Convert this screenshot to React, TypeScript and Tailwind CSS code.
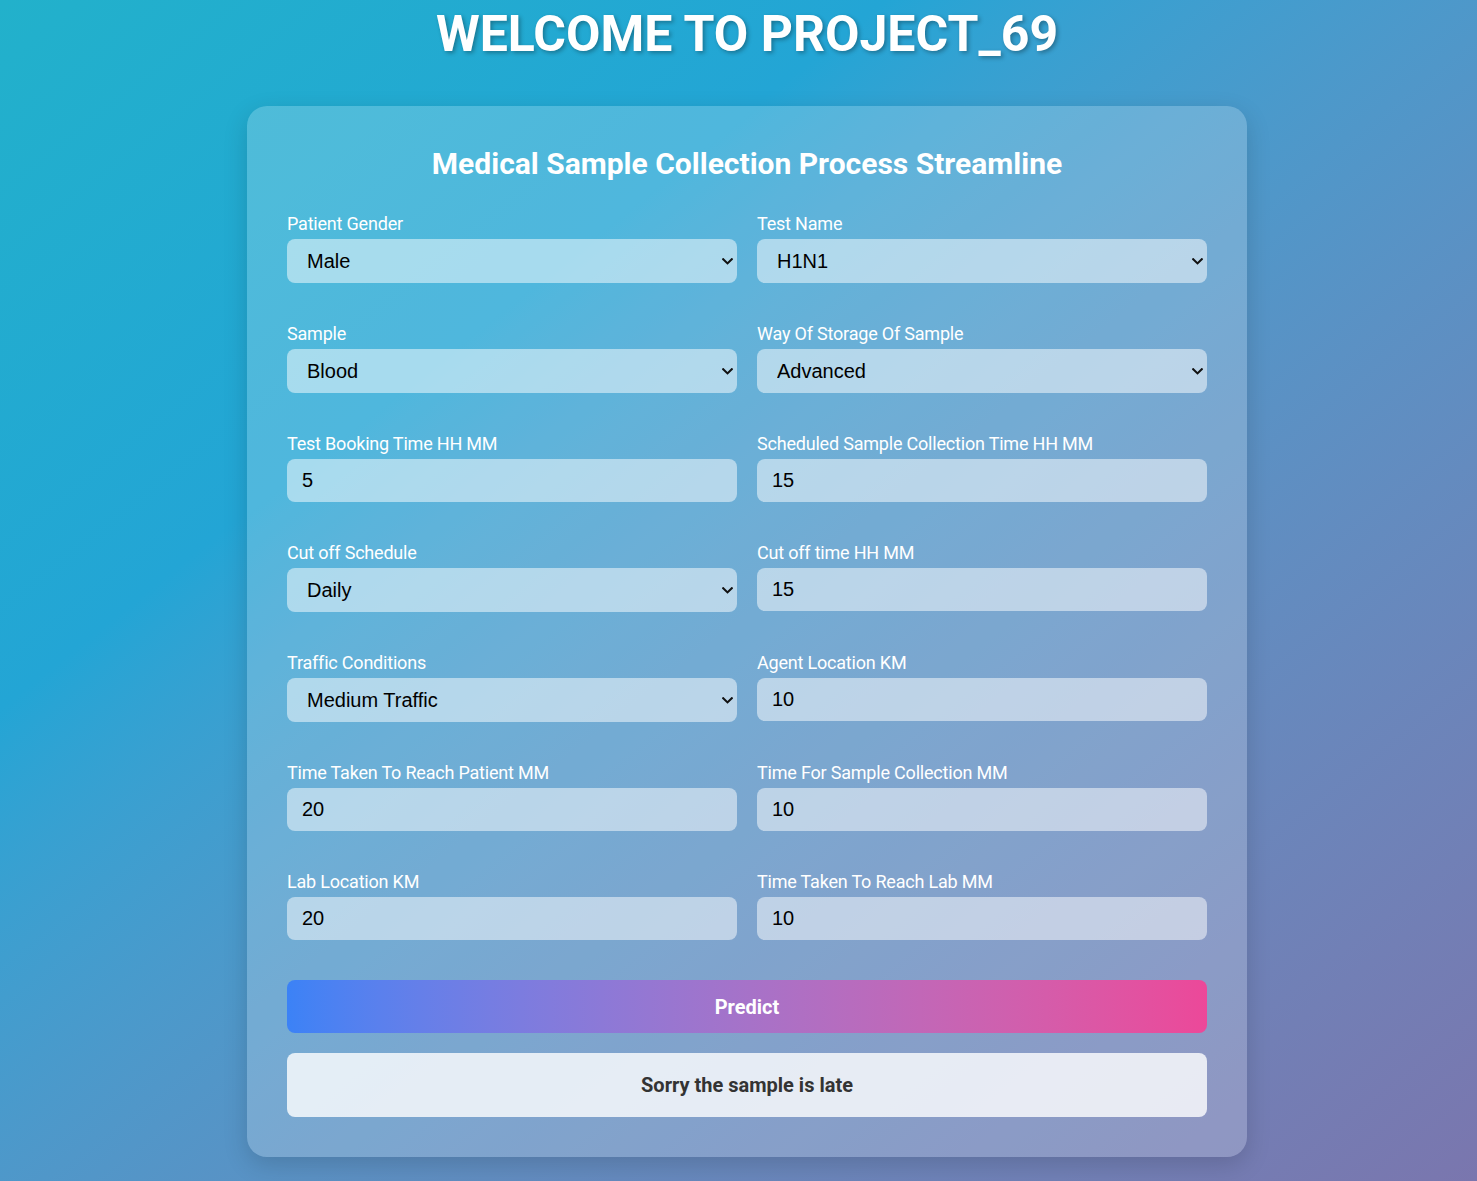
import { useState } from "react";

type Field = {
  label: string;
  kind: "select" | "input";
  value: string;
  options?: string[];
};

const fields: Field[] = [
  { label: "Patient Gender", kind: "select", value: "Male", options: ["Male", "Female"] },
  { label: "Test Name", kind: "select", value: "H1N1", options: ["H1N1", "CBC", "Lipid Profile", "HbA1c"] },
  { label: "Sample", kind: "select", value: "Blood", options: ["Blood", "Urine", "Swab"] },
  { label: "Way Of Storage Of Sample", kind: "select", value: "Advanced", options: ["Advanced", "Normal"] },
  { label: "Test Booking Time HH MM", kind: "input", value: "5" },
  { label: "Scheduled Sample Collection Time HH MM", kind: "input", value: "15" },
  { label: "Cut off Schedule", kind: "select", value: "Daily", options: ["Daily", "Sample by 5pm"] },
  { label: "Cut off time HH MM", kind: "input", value: "15" },
  { label: "Traffic Conditions", kind: "select", value: "Medium Traffic", options: ["Low Traffic", "Medium Traffic", "High Traffic"] },
  { label: "Agent Location KM", kind: "input", value: "10" },
  { label: "Time Taken To Reach Patient MM", kind: "input", value: "20" },
  { label: "Time For Sample Collection MM", kind: "input", value: "10" },
  { label: "Lab Location KM", kind: "input", value: "20" },
  { label: "Time Taken To Reach Lab MM", kind: "input", value: "10" },
];

function FormField({ field }: { field: Field }) {
  const [value, setValue] = useState(field.value);
  const control =
    "w-full rounded-lg bg-white/50 text-black text-[20px] font-['Liberation_Sans',Arial,sans-serif] outline-none border-0";

  return (
    <div>
      <label className="block mb-[5px] text-[18px] leading-[21px] text-white tracking-[-0.2px]">
        {field.label}
      </label>
      {field.kind === "select" ? (
        <div className="relative">
          <select
            className={control + " appearance-none h-[44px] pl-[20px] pr-[24px]"}
            value={value}
            onChange={(e) => setValue(e.target.value)}
          >
            {field.options?.map((o) => (
              <option key={o}>{o}</option>
            ))}
          </select>
          {/* native-looking chevron */}
          <svg
            className="pointer-events-none absolute right-[4px] top-[19px]"
            width="11"
            height="7"
            viewBox="0 0 11 7"
            fill="none"
          >
            <path d="M1.2 1.2 L5.5 5.4 L9.8 1.2" stroke="#111" strokeWidth="2.1" strokeLinecap="square" />
          </svg>
        </div>
      ) : (
        <input
          className={control + " h-[43px] px-[15px]"}
          value={value}
          onChange={(e) => setValue(e.target.value)}
        />
      )}
    </div>
  );
}

export default function App() {
  return (
    <div className="min-h-screen bg-gradient-to-br from-[#22b1cb] via-[#23a5d5] via-30% to-[#7a76ae] font-['Roboto',sans-serif] flex flex-col items-center pl-[17px] pt-[5px] pb-[24px]">
      <h1 className="text-[50px] leading-[59px] font-bold text-white [text-shadow:2px_2px_4px_rgba(0,0,0,0.3)] mb-[42px]">
        WELCOME TO PROJECT_69
      </h1>

      <div className="w-[1000px] rounded-[20px] bg-white/20 shadow-[0_8px_24px_rgba(0,0,0,0.15)] p-[40px]">
        <h2 className="text-center text-[30px] leading-[36px] font-bold text-white mb-[31px]">
          Medical Sample Collection Process Streamline
        </h2>

        <div className="grid grid-cols-2 gap-x-[20px] gap-y-[40px]">
          {fields.map((f) => (
            <FormField key={f.label} field={f} />
          ))}
        </div>

        <button className="mt-[40px] w-full h-[53px] rounded-lg bg-gradient-to-r from-[#3b82f6] to-[#ec4899] text-white text-[20px] font-bold">
          Predict
        </button>

        <div className="mt-[20px] h-[64px] rounded-lg bg-white/80 flex items-center justify-center text-[20px] font-bold text-[#333]">
          Sorry the sample is late
        </div>
      </div>
    </div>
  );
}
